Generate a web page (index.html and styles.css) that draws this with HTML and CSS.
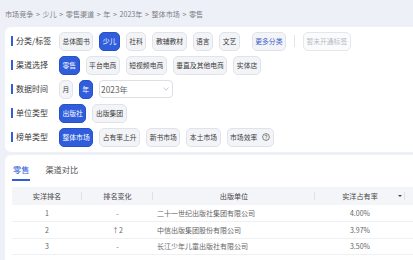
FILE: index.html
```html
<!DOCTYPE html>
<html lang="zh-CN">
<head>
  <meta charset="UTF-8">
  <meta name="viewport" content="width=device-width, initial-scale=1.0">
  <title>零售 | 市场竞争</title>
  <link rel="stylesheet" href="styles.css">
</head>
<body>

  <div class="crumbs">
    <span>市场竞争</span><span class="sep">&gt;</span><span>少儿</span><span class="sep">&gt;</span><span>零售渠道</span><span class="sep">&gt;</span><span>年</span><span class="sep">&gt;</span><span>2023年</span><span class="sep">&gt;</span><span>整体市场</span><span class="sep">&gt;</span><span>零售</span>
  </div>

  <div class="filter-card">
    <div class="row">
      <div class="label">分类/标签</div>
      <div class="pills">
        <span class="pill">总体图书</span>
        <span class="pill on">少儿</span>
        <span class="pill">社科</span>
        <span class="pill">教辅教材</span>
        <span class="pill">语言</span>
        <span class="pill">文艺</span>
        <span class="pill more">更多分类</span>
        <span class="vline"></span>
        <span class="pill off">暂未开通标签</span>
      </div>
    </div>

    <div class="row">
      <div class="label">渠道选择</div>
      <div class="pills">
        <span class="pill on">零售</span>
        <span class="pill">平台电商</span>
        <span class="pill">短视频电商</span>
        <span class="pill">垂直及其他电商</span>
        <span class="pill">实体店</span>
      </div>
    </div>

    <div class="row">
      <div class="label">数据时间</div>
      <div class="pills">
        <span class="pill">月</span>
        <span class="pill on">年</span>
        <div class="select">
          <span>2023年</span>
          <svg width="6" height="4" viewBox="0 0 6 4"><path d="M0.5 0.5 L3 3.2 L5.5 0.5" fill="none" stroke="#b8bcc6" stroke-width="0.8"/></svg>
        </div>
      </div>
    </div>

    <div class="row">
      <div class="label">单位类型</div>
      <div class="pills">
        <span class="pill on">出版社</span>
        <span class="pill">出版集团</span>
      </div>
    </div>

    <div class="row">
      <div class="label">榜单类型</div>
      <div class="pills">
        <span class="pill on">整体市场</span>
        <span class="pill">占有率上升</span>
        <span class="pill">新书市场</span>
        <span class="pill">本土市场</span>
        <span class="pill">市场效率
          <svg class="help" width="8" height="8" viewBox="0 0 8 8">
            <circle cx="4" cy="4" r="3.4" fill="none" stroke="#666" stroke-width="0.8"/>
            <path d="M2.9 3.1 C2.9 2.4 3.4 2.1 4 2.1 C4.6 2.1 5.1 2.5 5.1 3.1 C5.1 3.7 4.4 3.8 4.1 4.3 L4.1 4.8" fill="none" stroke="#666" stroke-width="0.8"/>
            <circle cx="4.1" cy="5.9" r="0.45" fill="#666"/>
          </svg>
        </span>
      </div>
    </div>
  </div>

  <div class="table-card">
    <div class="tabs">
      <span class="tab on">零售</span>
      <span class="tab">渠道对比</span>
    </div>

    <table class="rank-table">
      <colgroup>
        <col class="c1"><col class="c2"><col class="c3"><col class="c4"><col class="c5">
      </colgroup>
      <thead>
        <tr>
          <th>实洋排名</th>
          <th>排名变化</th>
          <th>出版单位</th>
          <th>实洋占有率<span class="sort"></span></th>
          <th></th>
        </tr>
      </thead>
      <tbody>
        <tr>
          <td>1</td>
          <td>-</td>
          <td class="name">二十一世纪出版社集团有限公司</td>
          <td>4.00%</td>
          <td></td>
        </tr>
        <tr>
          <td>2</td>
          <td>↑2</td>
          <td class="name">中信出版集团股份有限公司</td>
          <td>3.97%</td>
          <td></td>
        </tr>
        <tr>
          <td>3</td>
          <td>-</td>
          <td class="name">长江少年儿童出版社有限公司</td>
          <td>3.50%</td>
          <td></td>
        </tr>
      </tbody>
    </table>
  </div>

</body>
</html>
```

FILE: styles.css
```css
* {
  margin: 0;
  padding: 0;
  box-sizing: border-box;
  font-family: "Noto Sans CJK SC", "Noto Sans", sans-serif;
}

body {
  background-color: #eef0f7;
  color: #333;
  width: 413px;
  height: 260px;
  overflow: hidden;
}

.crumbs {
  height: 27px;
  padding: 9px 0 0 5px;
  font-size: 7.1px;
  line-height: 10px;
  color: #7a7d85;
  white-space: nowrap;
}

.crumbs .sep {
  margin: 0 2.6px;
}

/* filter panel */
.filter-card {
  margin-left: 5px;
  background: #fff;
  border-radius: 6px 0 0 6px;
  padding: 2px 0 3px 6px;
}

.row {
  display: flex;
  align-items: center;
  height: 24px;
}

.label {
  width: 48px;
  height: 10px;
  flex-shrink: 0;
  border-left: 2px solid #2f5ddb;
  padding-left: 3px;
  font-size: 8px;
  line-height: 10px;
  color: #3a3a3a;
  white-space: nowrap;
}

.pills {
  display: flex;
  align-items: center;
  gap: 6px;
}

.pill {
  display: flex;
  align-items: center;
  height: 19px;
  padding: 0 2.5px;
  border: 1px solid #e1e3ea;
  border-radius: 5px;
  background: #f3f4f8;
  font-size: 6.8px;
  color: #3a3a3a;
  white-space: nowrap;
}

.pill.on {
  background: #2f5ddb;
  border-color: #2a52c8;
  color: #fff;
}

.pill.more {
  margin-left: 6px;
  color: #3b5fc9;
}

.pill.off {
  background: #fafbfc;
  border-color: #e6e7eb;
  color: #b9bbc2;
}

.pill .help {
  margin-left: 5px;
}

.vline {
  width: 1px;
  height: 12px;
  margin: 0 2px;
  background: #e3e5ea;
}

.select {
  display: flex;
  align-items: center;
  justify-content: space-between;
  width: 74px;
  height: 18px;
  padding: 0 2.5px 0 1.5px;
  border: 1px solid #dcdfe6;
  border-radius: 4px;
  font-size: 8.3px;
  color: #666;
}

/* ranking table */
.table-card {
  margin: 3px 0 0 5px;
  height: 105px;
  overflow: hidden;
  background: #fff;
  border-radius: 6px 0 0 0;
  padding-left: 7px;
}

.tabs {
  display: flex;
  gap: 14px;
}

.tab {
  padding: 8px 1px 4px;
  font-size: 8.2px;
  line-height: 12px;
  color: #555;
  border-bottom: 2px solid transparent;
}

.tab.on {
  color: #2f5ddb;
  border-bottom-color: #2f5ddb;
}

.rank-table {
  margin-top: 6px;
  width: 401px;
  table-layout: fixed;
  border-collapse: collapse;
}

.rank-table .c1 { width: 70px; }
.rank-table .c2 { width: 71px; }
.rank-table .c3 { width: 162px; }
.rank-table .c4 { width: 90px; }
.rank-table .c5 { width: 8px; }

.rank-table th {
  position: relative;
  height: 18px;
  background: #f4f5f8;
  font-size: 7.1px;
  font-weight: normal;
  color: #444;
  text-align: center;
}

.rank-table th::after {
  content: "";
  position: absolute;
  right: 0;
  top: 5px;
  width: 1px;
  height: 8px;
  background: #dfe1e6;
}

.rank-table th:last-child::after {
  display: none;
}

.rank-table .sort {
  position: absolute;
  right: 3px;
  top: 8px;
  border-left: 2px solid transparent;
  border-right: 2px solid transparent;
  border-top: 2.5px solid #444;
}

.rank-table td {
  height: 16.5px;
  font-size: 7px;
  color: #666;
  text-align: center;
  border-bottom: 1px solid #eff0f3;
  white-space: nowrap;
}

.rank-table td.name {
  text-align: left;
  padding-left: 4px;
}
```
